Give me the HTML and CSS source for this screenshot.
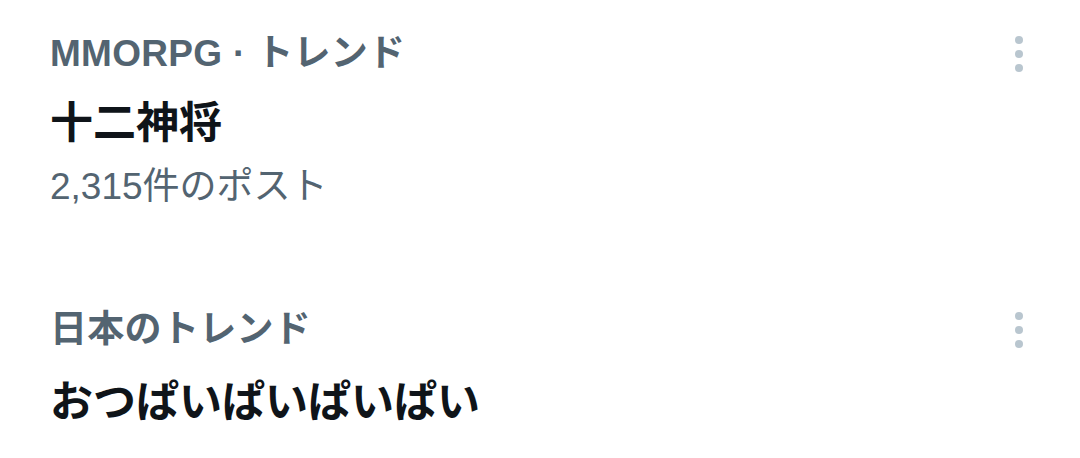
FILE: index.html
```html
<!DOCTYPE html>
<html lang="ja">
<head>
    <meta charset="UTF-8">
    <meta name="viewport" content="width=device-width, initial-scale=1.0">
    <title>トレンド</title>
    <link rel="stylesheet" href="styles.css">
</head>
<body>
    <div class="trends">
        <div class="trend">
            <div class="trend-body">
                <div class="trend-meta">MMORPG · トレンド</div>
                <div class="trend-title">十二神将</div>
                <div class="trend-count">2,315件のポスト</div>
            </div>
            <button class="more" aria-label="その他">
                <svg viewBox="0 0 10 36" width="10" height="36">
                    <circle cx="5" cy="4" r="4"></circle>
                    <circle cx="5" cy="18" r="4"></circle>
                    <circle cx="5" cy="32" r="4"></circle>
                </svg>
            </button>
        </div>
        <div class="trend second">
            <div class="trend-body">
                <div class="trend-meta">日本のトレンド</div>
                <div class="trend-title">おつぱいぱいぱいぱい</div>
            </div>
            <button class="more" aria-label="その他">
                <svg viewBox="0 0 10 36" width="10" height="36">
                    <circle cx="5" cy="4" r="4"></circle>
                    <circle cx="5" cy="18" r="4"></circle>
                    <circle cx="5" cy="32" r="4"></circle>
                </svg>
            </button>
        </div>
    </div>
</body>
</html>
```

FILE: styles.css
```css
body {
    margin: 0;
    background: #ffffff;
    font-family: "Liberation Sans", "Noto Sans CJK JP", sans-serif;
    color: #0f1419;
}
.trends {
    padding: 31px 0 0 50px;
}
.trend {
    display: flex;
    align-items: flex-start;
    justify-content: space-between;
    padding-right: 56px;
}
.trend + .trend {
    margin-top: 97px;
}
.trend-meta {
    font-size: 37px;
    line-height: 46px;
    font-weight: bold;
    color: #536471;
    letter-spacing: 0.3px;
}
.trend-title {
    margin-top: 18px;
    font-size: 43px;
    line-height: 56px;
    font-weight: bold;
}
.second .trend-title {
    margin-top: 21px;
}
.trend-count {
    margin-top: 13px;
    font-size: 37px;
    line-height: 46px;
    color: #536471;
}
.more {
    display: flex;
    align-items: center;
    justify-content: center;
    height: 46px;
    padding: 0;
    border: none;
    background: none;
}
.more svg {
    fill: #b9c6cf;
}
```
